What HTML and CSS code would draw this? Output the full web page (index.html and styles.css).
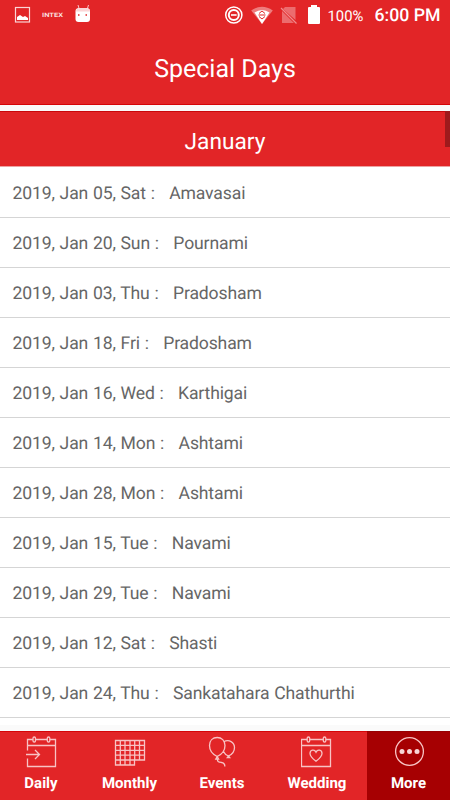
FILE: index.html
```html
<!DOCTYPE html>
<html lang="en">
<head>
<meta charset="utf-8">
<title>Special Days</title>
<link rel="stylesheet" href="styles.css">
</head>
<body>
<div class="app">
  <header class="top">
    <div class="status">
      <svg class="status-left" viewBox="0 0 100 32" width="100" height="32">
        <rect x="15.500" y="7.500" width="14" height="14.500" fill="none" stroke="#fbd5d6" stroke-width="1.200"/>
        <path d="M17 20v-3l3-2 3 2 2-1 3 2v2z" fill="#fff"/>
        <text class="brand" x="42" y="17.200" textLength="21" lengthAdjust="spacingAndGlyphs">INTEX</text>
        <path d="M78 5l1.200 4M88.500 5l-1.200 4" stroke="#f9c4c5" stroke-width="1"/>
        <path d="M75.500 11q0-3 4-3h6.500q4 0 4 3v8q0 3-3 3H78.500q-3 0-3-3z" fill="#fff"/>
        <path d="M76 11.500q0-3.500 4-3.500h6q4 0 4 3.500z" fill="#fbd5d6"/>
        <path d="M78 14.200h1.500v1.500H78zM85.500 14.200H87v1.500h-1.500z" fill="#e22527"/>
      </svg>
      <svg class="status-icons" viewBox="215 0 110 32" width="110" height="32">
        <g fill="none" stroke="#fff"><circle cx="233.800" cy="15" r="8.100" stroke-width="1.500"/><circle cx="233.800" cy="15" r="5" stroke-width="2"/><path d="M231 15h5.600" stroke-width="1.600"/></g>
        <path d="M251.200 10.500q10.800-7.500 21.600 0L262 24z" fill="#ee7c7d"/>
        <path d="M254.500 12.500q7.500-5 15 0L262 24z" fill="#fff"/>
        <path d="M259 13.500l3-2.500 3 2.500M259 16.500l3 2.500 3-2.500M258.500 15h7" fill="none" stroke="#e22527"/>
        <path d="M285 7h10.500v13L283 9zM282 11l12 12h-12z" fill="#ec6c6e"/>
        <path d="M281 8l15.500 15.500" stroke="#f08a8b" stroke-width="1.200"/>
        <path d="M311 5h6v2h2q1 0 1 1v15q0 1-1 1h-10q-1 0-1-1V8q0-1 1-1h2z" fill="#fff"/>
      </svg>
      <span class="battery">100%</span>
      <span class="clock">6:00 PM</span>
    </div>
    <h1>Special Days</h1>
  </header>
  <main>
    <h2>January</h2>
    <ul>
      <li>2019, Jan 05, Sat :   Amavasai</li>
      <li>2019, Jan 20, Sun :   Pournami</li>
      <li>2019, Jan 03, Thu :   Pradosham</li>
      <li>2019, Jan 18, Fri :   Pradosham</li>
      <li>2019, Jan 16, Wed :   Karthigai</li>
      <li>2019, Jan 14, Mon :   Ashtami</li>
      <li>2019, Jan 28, Mon :   Ashtami</li>
      <li>2019, Jan 15, Tue :   Navami</li>
      <li>2019, Jan 29, Tue :   Navami</li>
      <li>2019, Jan 12, Sat :   Shasti</li>
      <li>2019, Jan 24, Thu :   Sankatahara Chathurthi</li>
    </ul>
    <div class="scrollbar"></div>
  </main>
  <nav>
    <a class="tab">
      <svg viewBox="0 0 32 32" width="32" height="32"><path d="M2.500 14.500V3.500H8M11 3.500h11M25 3.500h5.500v27h-28V22.500M2.500 9.500h28M1 18.500h13.500M10 14l4.500 4.500L10 23"/><rect x="8" y="1" width="2.500" height="5" rx="1.200"/><rect x="22.300" y="1" width="2.500" height="5" rx="1.200"/></svg>
      <span>Daily</span>
    </a>
    <a class="tab">
      <svg viewBox="0 0 32 32" width="32" height="32"><path d="M1.500 4.500h29v19.500h-10v5h-19zM1.500 9.400h29M1.500 14.300h29M1.500 19.200h29M1.500 24h19M6.300 4.500V29M11 4.500V29M16 4.500V29M20.700 4.500V24M25.500 4.500V24"/></svg>
      <span>Monthly</span>
    </a>
    <a class="tab">
      <svg viewBox="0 0 32 32" width="32" height="32"><path d="M11.200 20.500C7 18.500 3.500 14.500 3.500 9.500C3.500 4.500 6.800 1.500 11.200 1.500S19 4.500 19 9.500C19 14.500 15.500 18.500 11.200 20.500zM9.800 23l1.400-2.500 1.400 2.500zM11.500 23c-.5 3 2 3.200 4 3.500s3.500 1.300 3.300 4M17.500 6C23 2.500 28.500 6.500 28.500 11.500C28.500 15 26 18.500 22.500 20C20.500 19.300 18.500 17.700 17.500 15.500M21.300 21.500l1.200-1.700 1.200 1.700z"/></svg>
      <span>Events</span>
    </a>
    <a class="tab">
      <svg viewBox="1 0 32 32" width="32" height="32"><path d="M7 3.500H1.500v27h29v-27H26M10 3.500h13M1.500 9.500h29M16 25.300c-3-2.300-6-4.600-6-7.800 0-3.700 4.500-4.600 6-1.300 1.500-3.300 6-2.400 6 1.300 0 3.200-3 5.500-6 7.800z"/><rect x="7.200" y="1" width="2.500" height="5" rx="1.200"/><rect x="23.300" y="1" width="2.500" height="5" rx="1.200"/></svg>
      <span>Wedding</span>
    </a>
    <a class="tab active">
      <svg viewBox="0 0 32 32" width="32" height="32"><circle cx="16.500" cy="15.500" r="13.900"/><g class="dots"><circle cx="9" cy="15.500" r="2.500"/><circle cx="16.500" cy="15.500" r="2.500"/><circle cx="24" cy="15.500" r="2.500"/></g></svg>
      <span>More</span>
    </a>
  </nav>
</div>
</body>
</html>
```
FILE: styles.css
```css
* { box-sizing: border-box; }
body { margin: 0; font-family: Roboto, sans-serif; text-rendering: geometricPrecision; }
.app {
  width: 450px;
  height: 800px;
  display: flex;
  flex-direction: column;
  overflow: hidden;
  background: #fafafa;
}
.top {
  height: 105px;
  background: #e22527;
  border-bottom: 1px solid #d50508;
  color: #fff;
}
.status { display: flex; height: 32px; align-items: center; }
.status-icons { margin-left: 115px; }
.brand { font-size: 6px; font-weight: 700; fill: #fbdcdc; }
.battery { width: 49.500px; padding-left: 2.500px; font-size: 14.800px; white-space: nowrap; }
.clock { font-size: 17.700px; font-weight: 500; white-space: nowrap; }
h1, h2 { margin: 0; font-weight: 400; text-align: center; color: #fff; }
h1 { font-size: 25px; line-height: 76px; }
main {
  position: relative;
  height: 614px;
  margin: 6px 0;
  background: #fff;
}
h2 {
  height: 56px;
  font-size: 22.700px;
  line-height: 59px;
  background: #e22527;
  border-top: 1px solid #c9080b;
  border-bottom: 1px solid #eda2a2;
}
ul { margin: 0; padding: 0; list-style: none; }
li {
  height: 50px;
  padding: 2px 0 0 12.500px;
  border-bottom: 1px solid #d5d5d5;
  color: #666;
  font-size: 17.600px;
  line-height: 49px;
  letter-spacing: -0.150px;
  word-spacing: 0.600px;
  white-space: pre;
}
li:first-child { height: 51px; padding-top: 3px; }
.scrollbar {
  position: absolute;
  top: 0;
  right: 0;
  width: 5px;
  height: 36px;
  background: #9e1a1c;
}
nav {
  display: grid;
  grid-template-columns: 82px 95px 90px 100px 83px;
  height: 69px;
  background: #e22527;
  color: #fff;
}
.tab {
  display: flex;
  flex-direction: column;
  align-items: center;
  padding-top: 4px;
  border-top: 1px solid #d50508;
  font-size: 15px;
  font-weight: 700;
  line-height: 20px;
}
.tab span { margin-top: 5px; }
.tab svg { fill: none; stroke: #f8c3c4; stroke-width: 1.300; }
.active { background: #a60002; border-top-color: #970002; }
.tab .dots { fill: #f8d5d6; stroke: none; }
```
